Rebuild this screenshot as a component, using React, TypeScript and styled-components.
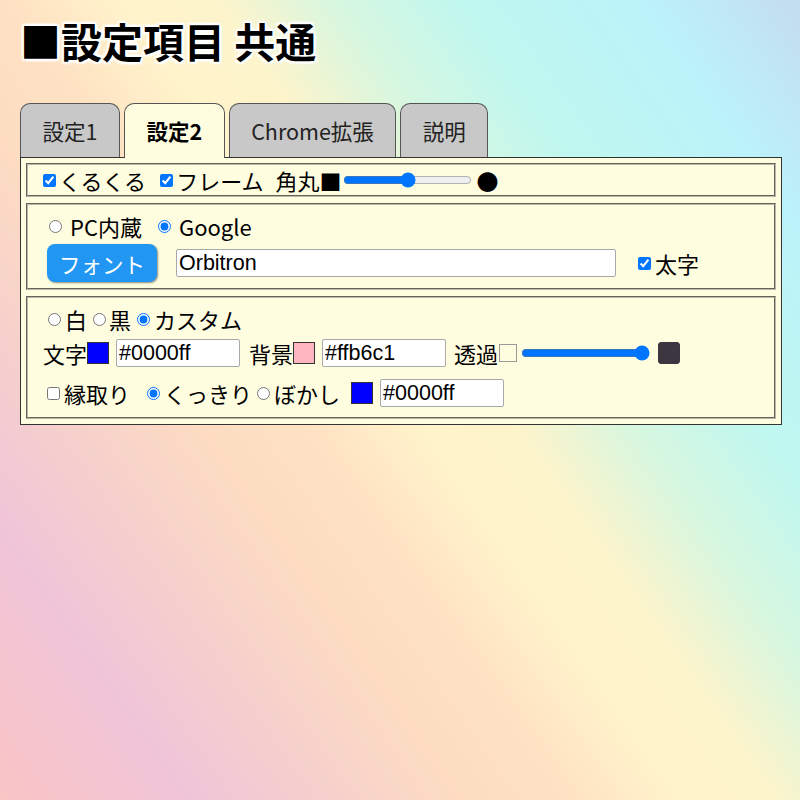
import * as React from 'react'
import styled, { createGlobalStyle } from 'styled-components'

const GlobalStyle = createGlobalStyle`
  html, body {
    margin: 0;
    padding: 0;
  }
  body {
    font-family: "Noto Sans CJK JP", "Noto Sans", sans-serif;
    color: #000;
  }
`

const Page = styled.div`
  min-height: 800px;
  box-sizing: border-box;
  padding: 16px 18px 0 20px;
  background: linear-gradient(
    55deg,
    #f9c5c5 0%,
    #f0c4d8 14%,
    #f5d0cc 24%,
    #fddcc2 34%,
    #fee2c3 42%,
    #fff3cb 50%,
    #fdf4cb 57%,
    #d6f7e0 66%,
    #c0f7ef 75%,
    #bbf3fa 88%,
    #c4dcf0 100%
  );
`

const Title = styled.h1`
  margin: 0 0 38px;
  font-size: 41px;
  line-height: 49px;
  font-weight: 700;
  text-shadow: 2px 2px 2px #fff, -2px -2px 2px #fff, 2px -2px 2px #fff,
    -2px 2px 2px #fff, 0 0 4px #fff;
`

const TabBar = styled.div`
  display: flex;
  gap: 4px;
  position: relative;
  z-index: 1;
`

const Tab = styled.div<{ $active?: boolean }>`
  height: ${(p) => (p.$active ? 54 : 53)}px;
  line-height: 53px;
  padding: 0 21.5px;
  border: 1px solid #555;
  border-bottom: none;
  border-radius: 10px 10px 0 0;
  margin-bottom: ${(p) => (p.$active ? -1 : 0)}px;
  background: ${(p) => (p.$active ? '#fffde0' : '#c8c8c8')};
  font-size: 21.5px;
  font-weight: ${(p) => (p.$active ? 700 : 400)};
  color: ${(p) => (p.$active ? '#000' : '#222')};
`

const Panel = styled.div`
  display: flex;
  flex-direction: column;
  gap: 6px;
  padding: 5px;
  border: 1px solid #333;
  background: #fffde0;
  font-size: 22px;
`

const Box = styled.div<{ $pad: string }>`
  padding: ${(p) => p.$pad};
  border: 2px groove #b8b8a8;
`

const Row = styled.div<{ $h: number; $mt?: number }>`
  display: flex;
  align-items: center;
  height: ${(p) => p.$h}px;
  margin-top: ${(p) => p.$mt ?? 0}px;
  white-space: nowrap;
`

const Label = styled.label<{ $mr?: number }>`
  display: inline-flex;
  align-items: center;
  margin-right: ${(p) => p.$mr ?? 0}px;
`

const Text = styled.span<{ $ml?: number }>`
  margin-left: ${(p) => p.$ml ?? 0}px;
`

const Check = styled.input.attrs({ type: 'checkbox' })<{ $ml?: number; $mr?: number }>`
  width: 13px;
  height: 13px;
  margin: 0 ${(p) => p.$mr ?? 3}px 0 ${(p) => p.$ml ?? 4}px;
`

const Radio = styled.input.attrs({ type: 'radio' })<{ $ml?: number; $mr?: number }>`
  width: 13px;
  height: 13px;
  margin: 0 ${(p) => p.$mr ?? 3}px 0 ${(p) => p.$ml ?? 5}px;
`

const Range = styled.input.attrs({ type: 'range' })<{ $ml?: number }>`
  width: 129px;
  margin: 0 2px 0 ${(p) => p.$ml ?? 2}px;
`

const Swatch = styled.span<{ $color: string; $size?: number; $ml?: number; $border?: string; $radius?: number }>`
  display: inline-block;
  box-sizing: border-box;
  width: ${(p) => p.$size ?? 22}px;
  height: ${(p) => p.$size ?? 22}px;
  margin-left: ${(p) => p.$ml ?? 0}px;
  background: ${(p) => p.$color};
  border: 1px solid ${(p) => p.$border ?? '#333'};
  border-radius: ${(p) => p.$radius ?? 0}px;
`

const TextField = styled.input<{ $w: number; $ml?: number }>`
  box-sizing: border-box;
  width: ${(p) => p.$w}px;
  height: 28px;
  margin-left: ${(p) => p.$ml ?? 0}px;
  padding: 0 2px;
  border: 1px solid #a9a9a9;
  border-radius: 2px;
  background: #fff;
  font-family: "Liberation Sans", Arial, sans-serif;
  font-size: 21.5px;
  color: #000;
`

const FontButton = styled.button`
  width: 110px;
  height: 38px;
  margin-left: 3px;
  padding: 0;
  border: none;
  border-radius: 8px;
  background: #2196f3;
  color: #fff;
  font-family: "Noto Sans CJK JP", "Noto Sans", sans-serif;
  font-size: 21.5px;
  box-shadow: 1px 1px 2px rgba(0, 0, 0, 0.45);
`

const Dot = styled.span`
  margin-left: 2px;
`

export default function App() {
  return (
    <>
      <GlobalStyle />
      <Page>
        <Title>■設定項目 共通</Title>
        <TabBar>
          <Tab>設定1</Tab>
          <Tab $active>設定2</Tab>
          <Tab>Chrome拡張</Tab>
          <Tab>説明</Tab>
        </TabBar>
        <Panel>
          <Box $pad="0 11px">
            <Row $h={30}>
              <Label $mr={10}>
                <Check defaultChecked />
                くるくる
              </Label>
              <Label $mr={12}>
                <Check defaultChecked />
                フレーム
              </Label>
              <Text>角丸■</Text>
              <Range defaultValue={50} />
              <Dot>●</Dot>
            </Row>
          </Box>
          <Box $pad="6px 16px 6px">
            <Row $h={30}>
              <Label $mr={11}>
                <Radio name="font" $mr={8} />
                PC内蔵
              </Label>
              <Label>
                <Radio name="font" $mr={8} defaultChecked />
                Google
              </Label>
            </Row>
            <Row $h={38} $mt={3}>
              <FontButton>フォント</FontButton>
              <TextField $w={440} $ml={19} defaultValue="Orbitron" />
              <Label>
                <Check defaultChecked $ml={22} $mr={4} />
                太字
              </Label>
            </Row>
          </Box>
          <Box $pad="6px 15px 9px">
            <Row $h={30}>
              <Label $mr={1}>
                <Radio name="color" $mr={4} />白
              </Label>
              <Label $mr={1}>
                <Radio name="color" $mr={3} />黒
              </Label>
              <Label>
                <Radio name="color" $mr={4} defaultChecked />
                カスタム
              </Label>
            </Row>
            <Row $h={30} $mt={4}>
              <Text>文字</Text>
              <Swatch $color="#0000ff" />
              <TextField $w={124} $ml={7} defaultValue="#0000ff" />
              <Text $ml={9}>背景</Text>
              <Swatch $color="#ffb6c1" />
              <TextField $w={124} $ml={7} defaultValue="#ffb6c1" />
              <Text $ml={8}>透過</Text>
              <Swatch $color="#fffde0" $size={18} $ml={1} $border="#999" />
              <Range defaultValue={100} $ml={4} />
              <Swatch $color="#3b3640" $ml={6} $border="#3b3640" $radius={3} />
            </Row>
            <Row $h={30} $mt={10}>
              <Label $mr={12}>
                <Check $mr={4} />
                縁取り
              </Label>
              <Label>
                <Radio name="edge" $mr={4} defaultChecked />
                くっきり
              </Label>
              <Label>
                <Radio name="edge" $mr={4} />
                ぼかし
              </Label>
              <Swatch $color="#0000ff" $ml={11} />
              <TextField $w={124} $ml={7} defaultValue="#0000ff" />
            </Row>
          </Box>
        </Panel>
      </Page>
    </>
  )
}
